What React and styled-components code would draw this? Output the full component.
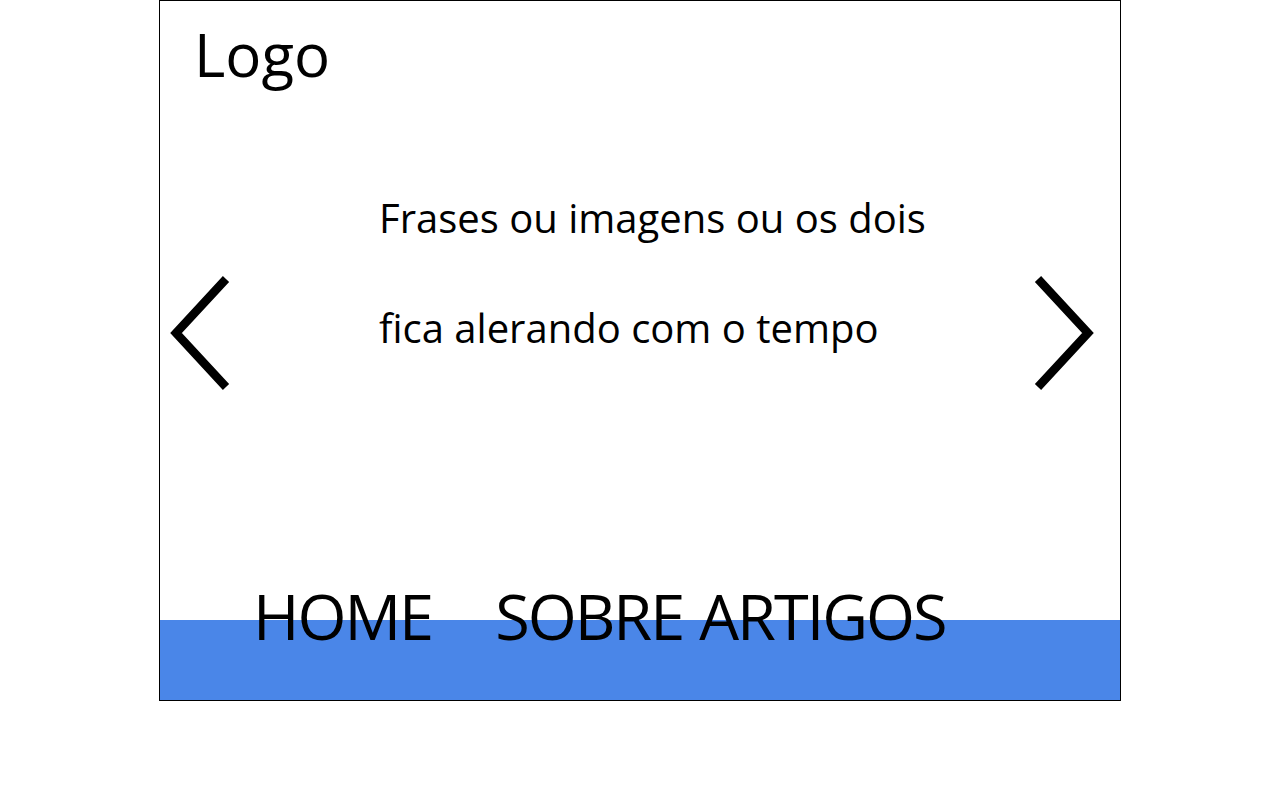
import styled, { createGlobalStyle } from 'styled-components';

const GlobalStyle = createGlobalStyle`
	body {
		margin: 0;
		background: #fff;
		font-family: "Open Sans", "Liberation Sans", sans-serif;
		color: #000;
	}
`;

const Frame = styled.div`
	width: 960px;
	height: 699px;
	margin: 0 auto;
	border: 1px solid #000;
	display: flex;
	flex-direction: column;
`;

const Header = styled.header`
	padding: 15px 34px 0;
`;

const Logo = styled.div`
	font-size: 60px;
	line-height: 76px;
`;

const Carousel = styled.section`
	display: flex;
	align-items: flex-end;
	margin-top: 71px;
	padding: 0 24px 0 8px;
`;

const Phrases = styled.div`
	flex: 1;
	padding-left: 149px;
	padding-bottom: 8px;
`;

const Phrase = styled.p`
	margin: 0;
	font-size: 40px;
	line-height: 110px;
`;

const ArrowButton = styled.button`
	border: 0;
	background: none;
	padding: 0;
	display: flex;
	cursor: pointer;
`;

const Footer = styled.footer`
	margin-top: auto;
	height: 80px;
	background: #4a86e8;
	display: flex;
	align-items: flex-start;
`;

const Nav = styled.nav`
	display: flex;
	margin: -36px 0 0 93px;
	font-size: 63px;
	line-height: 63px;
	letter-spacing: -2px;
`;

const NavLink = styled.a`
	color: #000;
	text-decoration: none;
	margin-right: ${ ( p ) => p.$gap }px;
`;

const Chevron = ( { dir } ) => (
	<svg width="62" height="116" viewBox="0 0 62 116">
		<polyline
			points={ dir === 'left' ? '58,4 8,58 58,112' : '4,4 54,58 4,112' }
			fill="none"
			stroke="#000"
			strokeWidth="8.5"
		/>
	</svg>
);

const App = () => (
	<>
		<GlobalStyle />
		<Frame>
			<Header>
				<Logo>Logo</Logo>
			</Header>
			<Carousel>
				<ArrowButton aria-label="anterior">
					<Chevron dir="left" />
				</ArrowButton>
				<Phrases>
					<Phrase>Frases ou imagens ou os dois</Phrase>
					<Phrase>fica alerando com o tempo</Phrase>
				</Phrases>
				<ArrowButton aria-label="próximo">
					<Chevron dir="right" />
				</ArrowButton>
			</Carousel>
			<Footer>
				<Nav>
					<NavLink href="#" $gap={ 63 }>HOME</NavLink>
					<NavLink href="#" $gap={ 16 }>SOBRE</NavLink>
					<NavLink href="#" $gap={ 0 }>ARTIGOS</NavLink>
				</Nav>
			</Footer>
		</Frame>
	</>
);

export default App;
